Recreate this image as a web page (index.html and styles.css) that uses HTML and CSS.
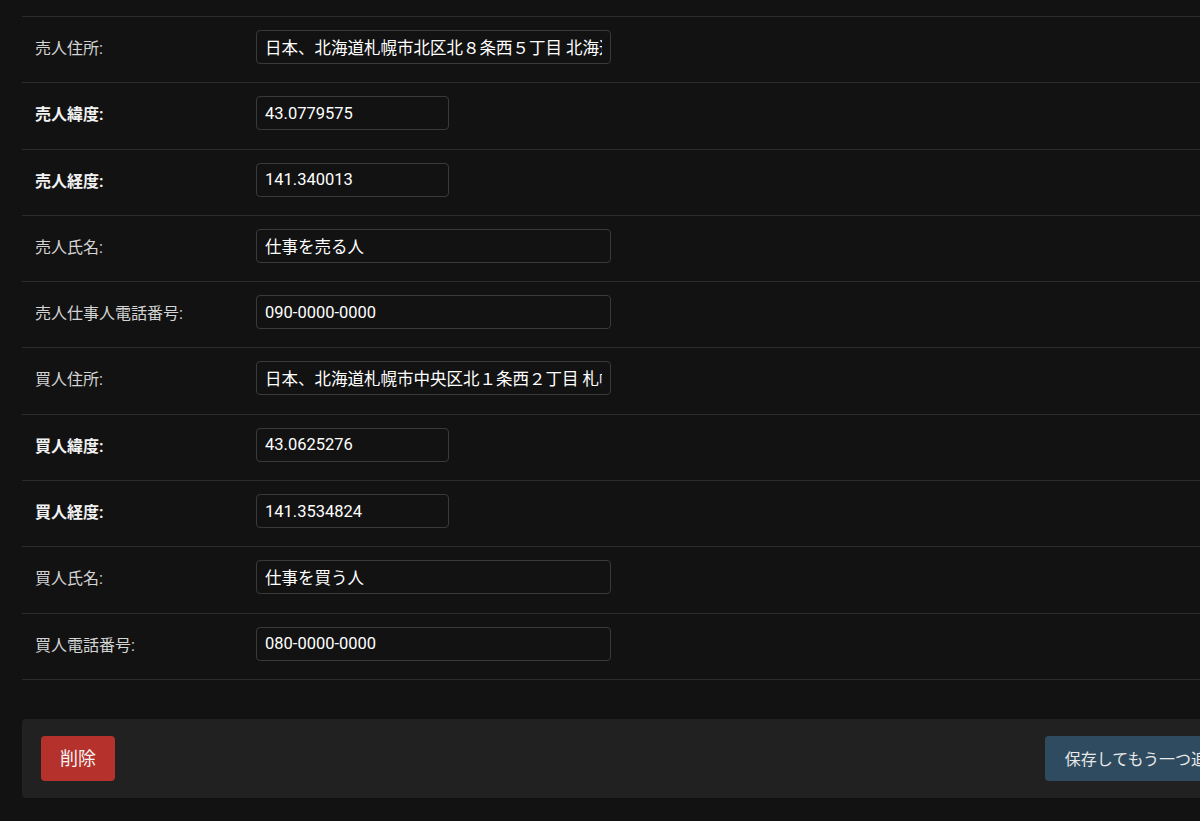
FILE: index.html
```html
<!DOCTYPE html>
<html lang="ja">

<head>
    <meta charset="UTF-8">
    <meta name="viewport" content="width=device-width, initial-scale=1.0">
    <title>取引の変更</title>
    <link rel="stylesheet" href="styles.css">
</head>

<body>
    <div class="content">
        <fieldset class="module">
            <div class="form-row">
                <label for="seller_address">売人住所:</label>
                <input type="text" id="seller_address" class="wide" value="日本、北海道札幌市北区北８条西５丁目 北海道大学">
            </div>
            <div class="form-row">
                <label for="seller_lat" class="required">売人緯度:</label>
                <input type="text" id="seller_lat" value="43.0779575">
            </div>
            <div class="form-row">
                <label for="seller_lng" class="required">売人経度:</label>
                <input type="text" id="seller_lng" value="141.340013">
            </div>
            <div class="form-row">
                <label for="seller_name">売人氏名:</label>
                <input type="text" id="seller_name" class="wide" value="仕事を売る人">
            </div>
            <div class="form-row">
                <label for="seller_tel">売人仕事人電話番号:</label>
                <input type="text" id="seller_tel" class="wide" value="090-0000-0000">
            </div>
            <div class="form-row">
                <label for="buyer_address">買人住所:</label>
                <input type="text" id="buyer_address" class="wide" value="日本、北海道札幌市中央区北１条西２丁目 札幌市役所">
            </div>
            <div class="form-row">
                <label for="buyer_lat" class="required">買人緯度:</label>
                <input type="text" id="buyer_lat" value="43.0625276">
            </div>
            <div class="form-row">
                <label for="buyer_lng" class="required">買人経度:</label>
                <input type="text" id="buyer_lng" value="141.3534824">
            </div>
            <div class="form-row">
                <label for="buyer_name">買人氏名:</label>
                <input type="text" id="buyer_name" class="wide" value="仕事を買う人">
            </div>
            <div class="form-row">
                <label for="buyer_tel">買人電話番号:</label>
                <input type="text" id="buyer_tel" class="wide" value="080-0000-0000">
            </div>
        </fieldset>

        <div class="submit-row">
            <a href="#" class="deletelink">削除</a>
            <input type="submit" class="save-another" value="保存してもう一つ追加">
        </div>
    </div>
</body>

</html>
```

FILE: styles.css
```css
html,
body {
    overflow: hidden;
}

body {
    margin: 0;
    background-color: #121212;
    color: #d0d0d0;
    font-family: Roboto, "Noto Sans CJK JP", sans-serif;
    height: 821px;
}

.content {
    width: 1240px;
    margin-left: 22px;
    padding-top: 16px;
}

.module {
    margin: 0;
    padding: 0;
    border: none;
    border-top: 1px solid #2c2c2c;
}

.form-row {
    display: flex;
    align-items: flex-start;
    padding: 13px 0 18.3px 13px;
    border-bottom: 1px solid #2c2c2c;
}

.form-row label {
    width: 221px;
    flex-shrink: 0;
    font-size: 16px;
    line-height: 20px;
    padding-top: 9px;
    color: #d4d4d4;
}

.form-row label.required {
    font-weight: bold;
    color: #f2f2f2;
}

.form-row input {
    width: 193px;
    height: 34px;
    box-sizing: border-box;
    padding: 0 8px;
    background-color: #121212;
    border: 1px solid #3a3a3a;
    border-radius: 4px;
    color: #ffffff;
    font-family: Roboto, "Noto Sans CJK JP", sans-serif;
    font-size: 16.5px;
}

.form-row input.wide {
    width: 355px;
}

.submit-row {
    display: flex;
    align-items: center;
    margin-top: 39px;
    padding: 17px 19px;
    background-color: #212121;
    border-radius: 4px;
}

.deletelink {
    display: inline-block;
    height: 45px;
    line-height: 45px;
    padding: 0 19px;
    background-color: #b5312b;
    color: #f4f4f4;
    font-size: 18px;
    border-radius: 4px;
    text-decoration: none;
}

.save-another {
    margin-left: auto;
    height: 45px;
    padding: 0 20px;
    background-color: #2f4b5f;
    color: #e8e8e8;
    border: none;
    border-radius: 4px;
    font-family: Roboto, "Noto Sans CJK JP", sans-serif;
    font-size: 16px;
    cursor: pointer;
}
```
